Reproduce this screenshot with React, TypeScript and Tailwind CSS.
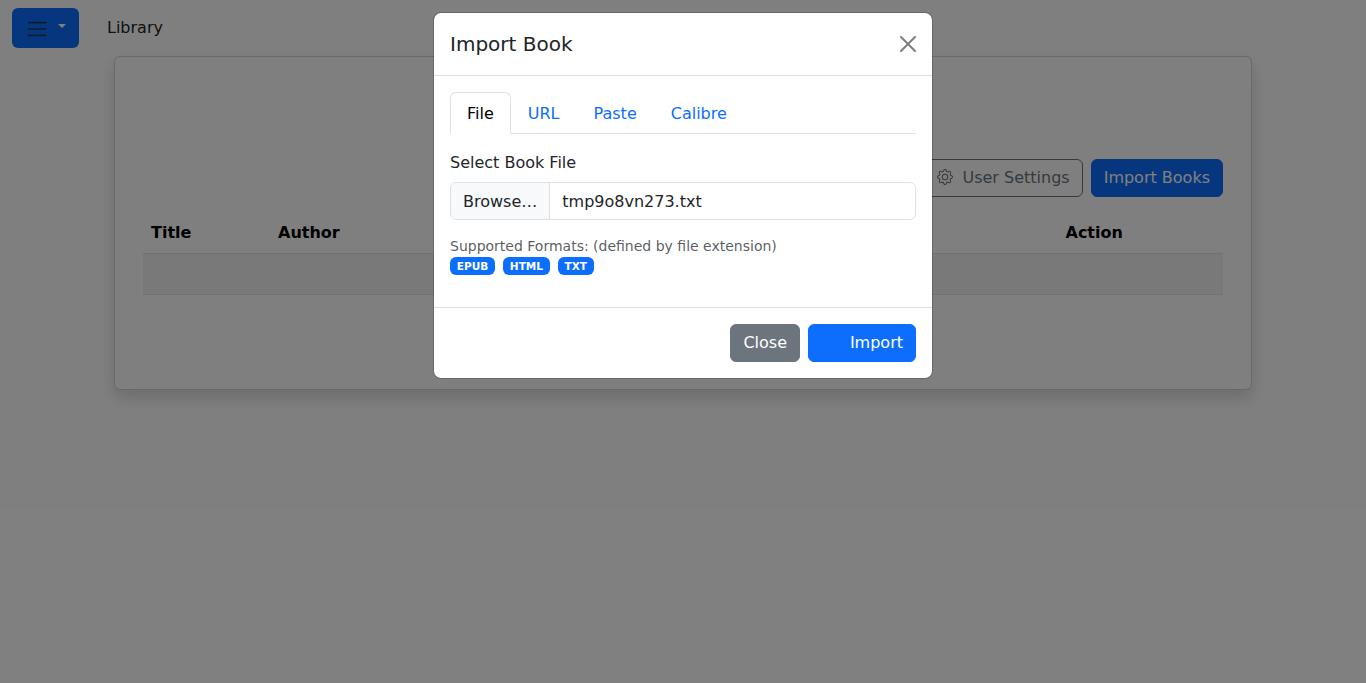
import React from "react";
import { BsGear } from "react-icons/bs";

const tabs = ["File", "URL", "Paste", "Calibre"];
const formats = ["EPUB", "HTML", "TXT"];

function Navbar() {
  return (
    <nav className="flex h-14 items-center pl-3">
      <button className="flex h-10 w-[67px] rounded-md bg-[#0d6efd] pt-[9px] pl-[13px]">
        <svg viewBox="0 0 30 30" className="size-6 shrink-0" fill="none">
          <path
            d="M4 7h22M4 15h22M4 23h22"
            stroke="rgba(33,37,41,.75)"
            strokeWidth="2"
            strokeLinecap="round"
            strokeMiterlimit="10"
          />
        </svg>
        <span className="mt-[7px] ml-[9px] h-0 w-0 border-x-[4.8px] border-t-[4.8px] border-x-transparent border-t-white" />
      </button>
      <span className="ml-7">Library</span>
    </nav>
  );
}

function LibraryCard() {
  return (
    <section className="mx-auto h-[334px] w-[1138px] rounded-md border border-black/[0.175] bg-white px-7 pt-[102px] shadow-[0_8px_16px_rgba(0,0,0,0.15)]">
      <div className="flex justify-end gap-2">
        <button className="flex h-[38px] items-center rounded-md border border-[#6c757d] px-3 text-[#6c757d]">
          <BsGear className="mr-[9px] mb-0.5 size-4" />
          User Settings
        </button>
        <button className="h-[38px] rounded-md border border-[#0d6efd] bg-[#0d6efd] px-3 text-white">
          Import Books
        </button>
      </div>
      <table className="mt-4 w-full table-fixed border-collapse text-left text-black">
        <thead>
          <tr className="h-10 border-b border-[#dee2e6]">
            <th className="w-[127px] px-2 pt-px font-bold">Title</th>
            <th className="px-2 pt-px font-bold">Author</th>
            <th className="w-[165.5px] px-2 pt-px font-bold">Action</th>
          </tr>
        </thead>
        <tbody>
          <tr className="h-[41px] border-b border-[#dee2e6] bg-[#f2f2f2]">
            <td colSpan={3} />
          </tr>
        </tbody>
      </table>
    </section>
  );
}

function ImportDialog() {
  return (
    <div
      role="dialog"
      className="w-[500px] rounded-lg border border-black/[0.175] bg-white bg-clip-padding"
    >
      <header className="flex items-center justify-between border-b border-[#dee2e6] p-4">
        <h5 className="text-xl leading-[30px]">Import Book</h5>
        <button aria-label="Close" className="opacity-50">
          <svg viewBox="0 0 16 16" className="size-4" fill="#000">
            <path d="M.293.293a1 1 0 0 1 1.414 0L8 6.586 14.293.293a1 1 0 1 1 1.414 1.414L9.414 8l6.293 6.293a1 1 0 0 1-1.414 1.414L8 9.414l-6.293 6.293a1 1 0 0 1-1.414-1.414L6.586 8 .293 1.707a1 1 0 0 1 0-1.414z" />
          </svg>
        </button>
      </header>

      <div className="h-[231px] p-4">
        <div className="flex h-[42px] border-b border-[#dee2e6]">
          {tabs.map((tab, i) => (
            <button
              key={tab}
              className={
                i === 0
                  ? "h-[42px] rounded-t-md border border-[#dee2e6] border-b-white bg-white px-4 pt-px text-black"
                  : "h-[42px] border border-transparent px-4 pt-px text-[#0d6efd]"
              }
            >
              {tab}
            </button>
          ))}
        </div>
        <label className="mt-[17px] mb-[7px] block">Select Book File</label>
        <div className="flex h-[38px] overflow-hidden rounded-md border border-[#dee2e6]">
          <span className="flex items-center border-r border-[#dee2e6] bg-[#f8f9fa] px-3 pt-0.5">
            Browse…
          </span>
          <span className="flex items-center px-3 pt-0.5">tmp9o8vn273.txt</span>
        </div>
        <p className="mt-4 text-[14px] leading-[21px] text-[#212529]/75">
          Supported Formats: (defined by file extension)
        </p>
        <div className="flex gap-2">
          {formats.map((format) => (
            <span
              key={format}
              className="flex h-[18px] items-center rounded-md bg-[#0d6efd] px-[6.825px] text-[10.5px] leading-none font-bold text-white"
            >
              {format}
            </span>
          ))}
        </div>
      </div>

      <footer className="flex justify-end gap-2 border-t border-[#dee2e6] p-4">
        <button className="h-[38px] rounded-md border border-[#6c757d] bg-[#6c757d] px-3 text-white">
          Close
        </button>
        <button className="h-[38px] w-[108px] rounded-md border border-[#0d6efd] bg-[#0d6efd] px-3 text-right text-white">
          Import
        </button>
      </footer>
    </div>
  );
}

export default function App() {
  return (
    <div className="relative h-[683px] overflow-hidden bg-white font-['DejaVu_Sans',sans-serif] text-base text-[#212529]">
      <Navbar />
      <LibraryCard />
      <div className="absolute inset-0 flex items-start justify-center bg-black/50 pt-3">
        <ImportDialog />
      </div>
    </div>
  );
}
